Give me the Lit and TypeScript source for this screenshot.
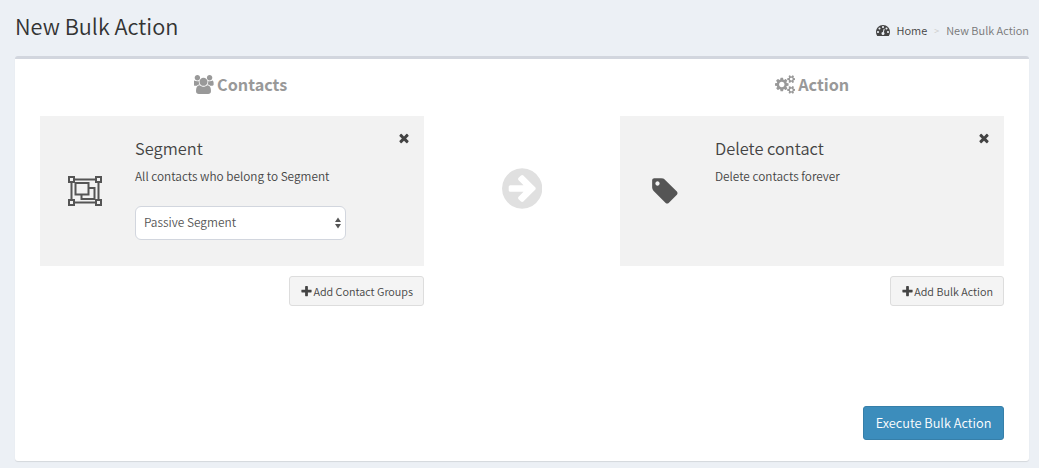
import { LitElement, html, css, svg } from "lit";
import { customElement } from "lit/decorators.js";

const P = {
  users: "M529 896q-162 5-265 128h-134q-82 0-138-40.5t-56-118.5q0-353 124-353 6 0 43.5 21t97.5 42.5 119 21.5q67 0 133-23-5 37-5 66 0 139 81 256zm1071 637q0 120-73 189.5t-194 69.5h-874q-121 0-194-69.5t-73-189.5q0-53 3.5-103.5t14-109 26.5-108.5 43-97.5 62-81 85.5-53.5 111.5-20q10 0 43 21.5t73 48 107 48 135 21.5 135-21.5 107-48 73-48 43-21.5q61 0 111.5 20t85.5 53.5 62 81 43 97.5 26.5 108.5 14 109 3.5 103.5zm-1024-1277q0 106-75 181t-181 75-181-75-75-181 75-181 181-75 181 75 75 181zm704 384q0 159-112.5 271.5t-271.5 112.5-271.5-112.5-112.5-271.5 112.5-271.5 271.5-112.5 271.5 112.5 112.5 271.5zm576 225q0 78-56 118.5t-138 40.5h-134q-103-123-265-128 81-117 81-256 0-29-5-66 66 23 133 23 59 0 119-21.5t97.5-42.5 43.5-21q124 0 124 353zm-128-609q0 106-75 181t-181 75-181-75-75-181 75-181 181-75 181 75 75 181z",
  cogs: "M896 896q0-106-75-181t-181-75-181 75-75 181 75 181 181 75 181-75 75-181zm768 512q0-52-38-90t-90-38-90 38-38 90q0 53 37.5 90.5t90.5 37.5 90.5-37.5 37.5-90.5zm0-1024q0-52-38-90t-90-38-90 38-38 90q0 53 37.5 90.5t90.5 37.5 90.5-37.5 37.5-90.5zm-384 421v185q0 10-7 19.5t-16 10.5l-155 24q-11 35-32 76 34 48 90 115 7 11 7 20 0 12-7 19-23 30-82.5 89.5t-78.5 59.5q-11 0-21-7l-115-90q-37 19-77 31-11 108-23 155-7 24-30 24h-186q-11 0-20-7.5t-10-17.5l-23-153q-34-10-75-31l-118 89q-7 7-20 7-11 0-21-8-144-133-144-160 0-9 7-19 10-14 41-53t47-61q-23-44-35-82l-152-24q-10-1-17-9.5t-7-19.5v-185q0-10 7-19.5t16-10.5l155-24q11-35 32-76-34-48-90-115-7-11-7-20 0-12 7-20 22-30 82-89t79-59q11 0 21 7l115 90q34-18 77-32 11-108 23-154 7-24 30-24h186q11 0 20 7.5t10 17.5l23 153q34 10 75 31l118-89q8-7 20-7 11 0 21 8 144 133 144 160 0 8-7 19-12 16-42 54t-45 60q23 48 34 82l152 23q10 2 17 10.5t7 19.5zm640 533v140q0 16-149 31-12 27-30 52 51 113 51 138 0 4-4 7-122 71-124 71-8 0-46-47t-52-68q-20 2-30 2t-30-2q-14 21-52 68t-46 47q-2 0-124-71-4-3-4-7 0-25 51-138-18-25-30-52-149-15-149-31v-140q0-16 149-31 13-29 30-52-51-113-51-138 0-4 4-7 4-2 35-20t59-34 30-16q8 0 46 46.5t52 67.5q20-2 30-2t30 2q51-71 92-112l6-2q4 0 124 70 4 3 4 7 0 25-51 138 17 23 30 52 149 15 149 31zm0-1024v140q0 16-149 31-12 27-30 52 51 113 51 138 0 4-4 7-122 71-124 71-8 0-46-47t-52-68q-20 2-30 2t-30-2q-14 21-52 68t-46 47q-2 0-124-71-4-3-4-7 0-25 51-138-18-25-30-52-149-15-149-31v-140q0-16 149-31 13-29 30-52-51-113-51-138 0-4 4-7 4-2 35-20t59-34 30-16q8 0 46 46.5t52 67.5q20-2 30-2t30 2q51-71 92-112l6-2q4 0 124 70 4 3 4 7 0 25-51 138 17 23 30 52 149 15 149 31z",
  times: "M1490 1322q0 40-28 68l-136 136q-28 28-68 28t-68-28l-294-294-294 294q-28 28-68 28t-68-28l-136-136q-28-28-28-68t28-68l294-294-294-294q-28-28-28-68t28-68l136-136q28-28 68-28t68 28l294 294 294-294q28-28 68-28t68 28l136 136q28 28 28 68t-28 68l-294 294 294 294q28 28 28 68z",
  plus: "M1600 736v192q0 40-28 68t-68 28h-416v416q0 40-28 68t-68 28h-192q-40 0-68-28t-28-68v-416h-416q-40 0-68-28t-28-68v-192q0-40 28-68t68-28h416v-416q0-40 28-68t68-28h192q40 0 68 28t28 68v416h416q40 0 68 28t28 68z",
  arrow: "M1285 896q0-27-18-45l-91-91-362-362q-18-18-45-18t-45 18l-91 91q-18 18-18 45t18 45l189 189h-502q-26 0-45 19t-19 45v128q0 26 19 45t45 19h502l-189 189q-19 19-19 45t19 45l91 91q18 18 45 18t45-18l362-362 91-91q18-18 18-45zm251 0q0 209-103 385.5t-279.5 279.5-385.5 103-385.5-103-279.5-279.5-103-385.5 103-385.5 279.5-279.5 385.5-103 385.5 103 279.5 279.5 103 385.5z",
  tag: "M576 448q0-53-37.5-90.5t-90.5-37.5-90.5 37.5-37.5 90.5 37.5 90.5 90.5 37.5 90.5-37.5 37.5-90.5zm1067 576q0 53-37 90l-491 492q-39 37-91 37-53 0-90-37l-715-716q-38-37-64.5-101t-26.5-117v-416q0-52 38-90t90-38h416q53 0 117 26.5t102 64.5l715 714q37 39 37 91z",
  gauge: "M384 1152q0-53-37.5-90.5t-90.5-37.5-90.5 37.5-37.5 90.5 37.5 90.5 90.5 37.5 90.5-37.5 37.5-90.5zm192-448q0-53-37.5-90.5t-90.5-37.5-90.5 37.5-37.5 90.5 37.5 90.5 90.5 37.5 90.5-37.5 37.5-90.5zm428 481l101-382q6-26-7.5-48.5t-38.5-29.5-48 6.5-30 39.5l-101 382q-60 5-107 43.5t-63 98.5q-20 77 20 146t117 89 146-20 89-117q16-60-6-117t-72-91zm660-33q0-53-37.5-90.5t-90.5-37.5-90.5 37.5-37.5 90.5 37.5 90.5 90.5 37.5 90.5-37.5 37.5-90.5zm-640-640q0-53-37.5-90.5t-90.5-37.5-90.5 37.5-37.5 90.5 37.5 90.5 90.5 37.5 90.5-37.5 37.5-90.5zm448 192q0-53-37.5-90.5t-90.5-37.5-90.5 37.5-37.5 90.5 37.5 90.5 90.5 37.5 90.5-37.5 37.5-90.5zm320 448q0 261-141 483-19 29-54 29h-1402q-35 0-54-29-141-221-141-483 0-182 71-348t191-286 286-191 348-71 348 71 286 191 191 286 71 348z",
};

const fa = (d: string, size: number, w = 1792) =>
  html`<svg width=${(size * w) / 1792} height=${size} viewBox="0 0 ${w} 1792" fill="currentColor" aria-hidden="true">${svg`<path d=${d}></path>`}</svg>`;

const segmentIcon = html`<svg width="34" height="30" viewBox="0 0 34 30" fill="none" stroke="#555" stroke-width="2" aria-hidden="true">
  <rect x="3.5" y="3.5" width="27" height="23"></rect>
  <rect x="7.5" y="7" width="13" height="11.5" fill="#f2f2f2"></rect>
  <path d="M20.5 12H26.5V23H13.5V18.5"></path>
  <g fill="#f2f2f2">
    <rect x="1" y="1" width="5" height="5"></rect>
    <rect x="28" y="1" width="5" height="5"></rect>
    <rect x="1" y="24" width="5" height="5"></rect>
    <rect x="28" y="24" width="5" height="5"></rect>
  </g>
</svg>`;

@customElement("app-root")
export class AppRoot extends LitElement {
  static styles = css`
    :host {
      display: block;
      height: 468px;
      overflow: hidden;
      background: #ecf0f5;
      font-family: "Noto Sans CJK SC", "Source Sans Pro", "Noto Sans", sans-serif;
      font-weight: 350;
      color: #444;
    }
    * { box-sizing: border-box; }
    svg { display: block; flex: none; }
    .top {
      height: 56px;
      padding: 0 10px 0 15px;
      display: flex;
      justify-content: space-between;
    }
    h1 {
      margin: 13px 0 0;
      font-size: 21.7px;
      line-height: 26px;
      font-weight: 350;
      color: #333;
    }
    .crumbs {
      margin-top: 21px;
      height: 18px;
      display: flex;
      align-items: center;
      font-size: 11px;
      color: #444;
    }
    .crumbs svg { margin-right: 6px; }
    .sep { color: #ccc; margin: 0 7px; font-size: 9px; }
    .cur { color: #777; }
    .box {
      margin: 0 10px 0 15px;
      height: 405px;
      background: #fff;
      border-top: 3px solid #d2d6de;
      border-radius: 3px;
      box-shadow: 0 1px 1px rgba(0, 0, 0, 0.1);
      padding: 14px 25px 21px;
      display: flex;
      flex-direction: column;
      justify-content: space-between;
    }
    .grid {
      display: grid;
      grid-template-columns: 384px 1fr 384px;
    }
    h3 {
      margin: 0 0 19px;
      height: 24px;
      padding-bottom: 2px;
      display: flex;
      justify-content: center;
      align-items: center;
      gap: 3px;
      font-size: 16.2px;
      font-weight: 700;
      color: #999;
    }
    .left h3 { margin-left: 17px; margin-right: 0; }
    .card {
      position: relative;
      height: 150px;
      background: #f2f2f2;
      display: flex;
    }
    .ic {
      width: 95px;
      flex: none;
      display: flex;
      align-items: center;
      justify-content: center;
      padding-right: 5px;
      color: #555;
    }
    .body { padding-top: 22px; }
    .name { font-size: 16.4px; line-height: 20px; color: #444; }
    .desc { margin-top: 9px; font-size: 11.8px; line-height: 18px; color: #444; }
    .close {
      position: absolute;
      top: 15px;
      right: 13px;
      color: #444;
    }
    .sel { position: relative; width: 211px; margin-top: 21px; }
    select {
      appearance: none;
      width: 100%;
      height: 34px;
      padding: 0 8px 3px;
      font: inherit;
      font-size: 11.9px;
      color: #555;
      background: #fff;
      border: 1px solid #d2d6de;
      border-radius: 6px;
      display: block;
    }
    .carets { position: absolute; right: 4px; top: 11px; }
    .add-row { display: flex; justify-content: flex-end; margin-top: 10px; }
    .add {
      height: 30px;
      padding: 0 10px;
      display: flex;
      align-items: center;
      gap: 0;
      font: inherit;
      font-size: 10.8px;
      color: #444;
      background: #f4f4f4;
      border: 1px solid #ddd;
      border-radius: 3px;
    }
    .mid {
      display: flex;
      justify-content: center;
      padding-top: 92px;
      color: #e0e0e0;
    }
    .foot { display: flex; justify-content: flex-end; }
    .run {
      height: 34px;
      width: 141px;
      padding: 0 0 2px;
      white-space: nowrap;
      font: inherit;
      font-size: 12.8px;
      color: #fff;
      background: #3c8dbc;
      border: 1px solid #367fa9;
      border-radius: 3px;
    }
  `;

  render() {
    return html`
      <div class="top">
        <h1>New Bulk Action</h1>
        <div class="crumbs">
          ${fa(P.gauge, 14)}<span>Home</span><span class="sep">&gt;</span><span class="cur">New Bulk Action</span>
        </div>
      </div>
      <div class="box">
        <div class="grid">
          <div class="left">
            <h3>${fa(P.users, 19, 1920)}<span>Contacts</span></h3>
            <div class="card">
              <div class="ic">${segmentIcon}</div>
              <div class="body">
                <div class="name">Segment</div>
                <div class="desc">All contacts who belong to Segment</div>
                <div class="sel">
                  <select><option>Passive Segment</option></select>
                  <svg class="carets" width="8" height="12" viewBox="0 0 8 12" fill="#555" aria-hidden="true"><path d="M4 .5L7 5H1zM4 11.5L1 7H7z"></path></svg>
                </div>
              </div>
              <div class="close">${fa(P.times, 14)}</div>
            </div>
            <div class="add-row"><button class="add">${fa(P.plus, 13)}Add Contact Groups</button></div>
          </div>
          <div class="mid">${fa(P.arrow, 47, 1536)}</div>
          <div>
            <h3>${fa(P.cogs, 19, 1920)}<span>Action</span></h3>
            <div class="card">
              <div class="ic">${fa(P.tag, 30)}</div>
              <div class="body">
                <div class="name">Delete contact</div>
                <div class="desc">Delete contacts forever</div>
              </div>
              <div class="close">${fa(P.times, 14)}</div>
            </div>
            <div class="add-row"><button class="add">${fa(P.plus, 13)}Add Bulk Action</button></div>
          </div>
        </div>
        <div class="foot"><button class="run">Execute Bulk Action</button></div>
      </div>
    `;
  }
}
